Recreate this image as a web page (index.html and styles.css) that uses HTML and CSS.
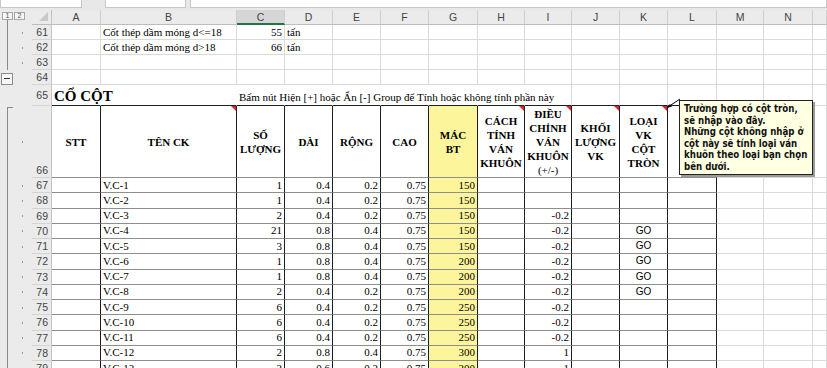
FILE: index.html
```html
<!DOCTYPE html>
<html lang="vi">
<head>
    <meta charset="UTF-8">
    <title>Khối lượng cổ cột</title>
    <link rel="stylesheet" href="styles.css">
</head>
<body>

    <!-- Formula bar (bottom edge only) -->
    <div class="topbar">
        <div class="namebox"></div>
        <div class="fxbox"></div>
        <div class="formula"></div>
    </div>

    <div class="sheet">

        <!-- Column headers -->
        <div class="row hdr">
            <div class="gut levels"><span class="lvl">1</span><span class="lvl">2</span></div>
            <div class="corner"><span class="tri"></span></div>
            <div class="ch">A</div>
            <div class="ch">B</div>
            <div class="ch sel">C</div>
            <div class="ch">D</div>
            <div class="ch">E</div>
            <div class="ch">F</div>
            <div class="ch">G</div>
            <div class="ch">H</div>
            <div class="ch">I</div>
            <div class="ch">J</div>
            <div class="ch">K</div>
            <div class="ch">L</div>
            <div class="ch">M</div>
            <div class="ch">N</div>
            <div class="ch"></div>
        </div>

        <div class="row">
            <div class="gut line"><span class="dot"></span></div>
            <div class="rh">61</div>
            <div class="c"></div>
            <div class="c">Cốt thép dầm móng d&lt;=18</div>
            <div class="c num">55</div>
            <div class="c">tấn</div>
            <div class="c"></div><div class="c"></div><div class="c"></div><div class="c"></div>
            <div class="c"></div><div class="c"></div><div class="c"></div><div class="c"></div>
            <div class="c"></div><div class="c"></div><div class="c"></div>
        </div>

        <div class="row">
            <div class="gut line"><span class="dot"></span></div>
            <div class="rh">62</div>
            <div class="c"></div>
            <div class="c">Cốt thép dầm móng d&gt;18</div>
            <div class="c num">66</div>
            <div class="c">tấn</div>
            <div class="c"></div><div class="c"></div><div class="c"></div><div class="c"></div>
            <div class="c"></div><div class="c"></div><div class="c"></div><div class="c"></div>
            <div class="c"></div><div class="c"></div><div class="c"></div>
        </div>

        <div class="row">
            <div class="gut line"><span class="dot"></span></div>
            <div class="rh">63</div>
            <div class="c"></div><div class="c"></div><div class="c"></div><div class="c"></div>
            <div class="c"></div><div class="c"></div><div class="c"></div><div class="c"></div>
            <div class="c"></div><div class="c"></div><div class="c"></div><div class="c"></div>
            <div class="c"></div><div class="c"></div><div class="c"></div>
        </div>

        <div class="row">
            <div class="gut"><span class="minus"></span></div>
            <div class="rh">64</div>
            <div class="c"></div><div class="c"></div><div class="c"></div><div class="c"></div>
            <div class="c"></div><div class="c"></div><div class="c"></div><div class="c"></div>
            <div class="c"></div><div class="c"></div><div class="c"></div><div class="c"></div>
            <div class="c"></div><div class="c"></div><div class="c"></div>
        </div>

        <!-- Section title -->
        <div class="row r65">
            <div class="gut"></div>
            <div class="rh">65</div>
            <div class="c nog top"><span class="title">CỔ CỘT</span></div>
            <div class="c nog top"></div>
            <div class="c nog top">Bấm nút Hiện [+] hoặc Ẩn [-] Group để Tính hoặc không tính phần này</div>
            <div class="c nog top"></div>
            <div class="c nog top"></div>
            <div class="c nog top"></div>
            <div class="c nog top"></div>
            <div class="c nog top"></div>
            <div class="c top"></div>
            <div class="c top"></div>
            <div class="c top"></div>
            <div class="c top"></div>
            <div class="c"></div><div class="c"></div><div class="c"></div>
        </div>

        <!-- Table header -->
        <div class="row r66">
            <div class="gut bracket"><span class="dot"></span></div>
            <div class="rh bottom">66</div>
            <div class="c t th"><span>STT</span></div>
            <div class="c t th note"><span>TÊN CK</span></div>
            <div class="c t th"><span>SỐ<br>LƯỢNG</span></div>
            <div class="c t th"><span>DÀI</span></div>
            <div class="c t th"><span>RỘNG</span></div>
            <div class="c t th"><span>CAO</span></div>
            <div class="c t th yel"><span>MÁC<br>BT</span></div>
            <div class="c t th note"><span>CÁCH<br>TÍNH<br>VÁN<br>KHUÔN</span></div>
            <div class="c t th note"><span>ĐIỀU<br>CHỈNH<br>VÁN<br>KHUÔN<br><em class="plain">(+/-)</em></span></div>
            <div class="c t th note"><span>KHỐI<br>LƯỢNG<br>VK</span></div>
            <div class="c t th note"><span>LOẠI<br>VK<br>CỘT<br>TRÒN</span></div>
            <div class="c t"></div>
            <div class="c"></div><div class="c"></div><div class="c"></div>
        </div>

        <div class="row data">
            <div class="gut line"><span class="dot"></span></div>
            <div class="rh">67</div>
            <div class="c t"></div><div class="c t">V.C-1</div>
            <div class="c t num">1</div><div class="c t num">0.4</div><div class="c t num">0.2</div><div class="c t num">0.75</div>
            <div class="c t num yel">150</div><div class="c t"></div><div class="c t num"></div><div class="c t"></div>
            <div class="c t go"></div><div class="c t"></div>
            <div class="c"></div><div class="c"></div><div class="c"></div>
        </div>

        <div class="row data">
            <div class="gut line"><span class="dot"></span></div>
            <div class="rh">68</div>
            <div class="c t"></div><div class="c t">V.C-2</div>
            <div class="c t num">1</div><div class="c t num">0.4</div><div class="c t num">0.2</div><div class="c t num">0.75</div>
            <div class="c t num yel">150</div><div class="c t"></div><div class="c t num"></div><div class="c t"></div>
            <div class="c t go"></div><div class="c t"></div>
            <div class="c"></div><div class="c"></div><div class="c"></div>
        </div>

        <div class="row data">
            <div class="gut line"><span class="dot"></span></div>
            <div class="rh">69</div>
            <div class="c t"></div><div class="c t">V.C-3</div>
            <div class="c t num">2</div><div class="c t num">0.4</div><div class="c t num">0.2</div><div class="c t num">0.75</div>
            <div class="c t num yel">150</div><div class="c t"></div><div class="c t num">-0.2</div><div class="c t"></div>
            <div class="c t go"></div><div class="c t"></div>
            <div class="c"></div><div class="c"></div><div class="c"></div>
        </div>

        <div class="row data">
            <div class="gut line"><span class="dot"></span></div>
            <div class="rh">70</div>
            <div class="c t"></div><div class="c t">V.C-4</div>
            <div class="c t num">21</div><div class="c t num">0.8</div><div class="c t num">0.4</div><div class="c t num">0.75</div>
            <div class="c t num yel">150</div><div class="c t"></div><div class="c t num">-0.2</div><div class="c t"></div>
            <div class="c t go">GO</div><div class="c t"></div>
            <div class="c"></div><div class="c"></div><div class="c"></div>
        </div>

        <div class="row data">
            <div class="gut line"><span class="dot"></span></div>
            <div class="rh">71</div>
            <div class="c t"></div><div class="c t">V.C-5</div>
            <div class="c t num">3</div><div class="c t num">0.8</div><div class="c t num">0.4</div><div class="c t num">0.75</div>
            <div class="c t num yel">150</div><div class="c t"></div><div class="c t num">-0.2</div><div class="c t"></div>
            <div class="c t go">GO</div><div class="c t"></div>
            <div class="c"></div><div class="c"></div><div class="c"></div>
        </div>

        <div class="row data">
            <div class="gut line"><span class="dot"></span></div>
            <div class="rh">72</div>
            <div class="c t"></div><div class="c t">V.C-6</div>
            <div class="c t num">1</div><div class="c t num">0.8</div><div class="c t num">0.4</div><div class="c t num">0.75</div>
            <div class="c t num yel">200</div><div class="c t"></div><div class="c t num">-0.2</div><div class="c t"></div>
            <div class="c t go">GO</div><div class="c t"></div>
            <div class="c"></div><div class="c"></div><div class="c"></div>
        </div>

        <div class="row data">
            <div class="gut line"><span class="dot"></span></div>
            <div class="rh">73</div>
            <div class="c t"></div><div class="c t">V.C-7</div>
            <div class="c t num">1</div><div class="c t num">0.8</div><div class="c t num">0.4</div><div class="c t num">0.75</div>
            <div class="c t num yel">200</div><div class="c t"></div><div class="c t num">-0.2</div><div class="c t"></div>
            <div class="c t go">GO</div><div class="c t"></div>
            <div class="c"></div><div class="c"></div><div class="c"></div>
        </div>

        <div class="row data">
            <div class="gut line"><span class="dot"></span></div>
            <div class="rh">74</div>
            <div class="c t"></div><div class="c t">V.C-8</div>
            <div class="c t num">2</div><div class="c t num">0.4</div><div class="c t num">0.2</div><div class="c t num">0.75</div>
            <div class="c t num yel">200</div><div class="c t"></div><div class="c t num">-0.2</div><div class="c t"></div>
            <div class="c t go">GO</div><div class="c t"></div>
            <div class="c"></div><div class="c"></div><div class="c"></div>
        </div>

        <div class="row data">
            <div class="gut line"><span class="dot"></span></div>
            <div class="rh">75</div>
            <div class="c t"></div><div class="c t">V.C-9</div>
            <div class="c t num">6</div><div class="c t num">0.4</div><div class="c t num">0.2</div><div class="c t num">0.75</div>
            <div class="c t num yel">250</div><div class="c t"></div><div class="c t num">-0.2</div><div class="c t"></div>
            <div class="c t go"></div><div class="c t"></div>
            <div class="c"></div><div class="c"></div><div class="c"></div>
        </div>

        <div class="row data">
            <div class="gut line"><span class="dot"></span></div>
            <div class="rh">76</div>
            <div class="c t"></div><div class="c t">V.C-10</div>
            <div class="c t num">6</div><div class="c t num">0.4</div><div class="c t num">0.2</div><div class="c t num">0.75</div>
            <div class="c t num yel">250</div><div class="c t"></div><div class="c t num">-0.2</div><div class="c t"></div>
            <div class="c t go"></div><div class="c t"></div>
            <div class="c"></div><div class="c"></div><div class="c"></div>
        </div>

        <div class="row data">
            <div class="gut line"><span class="dot"></span></div>
            <div class="rh">77</div>
            <div class="c t"></div><div class="c t">V.C-11</div>
            <div class="c t num">6</div><div class="c t num">0.4</div><div class="c t num">0.2</div><div class="c t num">0.75</div>
            <div class="c t num yel">250</div><div class="c t"></div><div class="c t num">-0.2</div><div class="c t"></div>
            <div class="c t go"></div><div class="c t"></div>
            <div class="c"></div><div class="c"></div><div class="c"></div>
        </div>

        <div class="row data">
            <div class="gut line"><span class="dot"></span></div>
            <div class="rh">78</div>
            <div class="c t"></div><div class="c t">V.C-12</div>
            <div class="c t num">2</div><div class="c t num">0.8</div><div class="c t num">0.4</div><div class="c t num">0.75</div>
            <div class="c t num yel">300</div><div class="c t"></div><div class="c t num">1</div><div class="c t"></div>
            <div class="c t go"></div><div class="c t"></div>
            <div class="c"></div><div class="c"></div><div class="c"></div>
        </div>

        <div class="row data">
            <div class="gut line"><span class="dot"></span></div>
            <div class="rh">79</div>
            <div class="c t"></div><div class="c t">V.C-13</div>
            <div class="c t num">2</div><div class="c t num">0.6</div><div class="c t num">0.2</div><div class="c t num">0.75</div>
            <div class="c t num yel">300</div><div class="c t"></div><div class="c t num">1</div><div class="c t"></div>
            <div class="c t go"></div><div class="c t"></div>
            <div class="c"></div><div class="c"></div><div class="c"></div>
        </div>

        <!-- Cell comment on K66 -->
        <svg class="pointer" width="30" height="20" viewBox="0 0 30 20">
            <line x1="9" y1="10" x2="21" y2="2" stroke="#000" stroke-width="1"/>
            <path d="M8 11 L13 9.5 L11 7 Z" fill="#000"/>
        </svg>
        <div class="comment">
            Trường hợp có cột tròn,<br>
            sẽ nhập vào đây.<br>
            Những cột không nhập ở<br>
            cột này sẽ tính loại ván<br>
            khuôn theo loại bạn chọn<br>
            bên dưới.
        </div>
    </div>

</body>
</html>
```

FILE: styles.css
```css
/* General */
* {
    margin: 0;
    padding: 0;
    box-sizing: border-box;
}

body {
    font-family: 'Liberation Serif', 'Times New Roman', serif;
    font-size: 11px;
    color: #000;
    background: #fff;
    width: 827px;
    height: 368px;
    overflow: hidden;
}

/* Formula bar strip */
.topbar {
    height: 10px;
    background: #e8e8e8;
    display: flex;
    align-items: flex-end;
    padding-bottom: 2px;
}

.namebox,
.fxbox,
.formula {
    height: 8px;
    background: #fff;
    border: 1px solid #c6c6c6;
    border-top: none;
}

.namebox { width: 82px; }
.fxbox { width: 81px; margin-left: 23px; }
.formula { flex: 1; margin-left: 4px; }

/* Sheet grid */
.sheet {
    position: relative;
}

.row {
    display: grid;
    grid-template-columns: 32px 20px 49px 136px 48px 48px 48px 48px 49px 47px 47px 48px 48px 49px 47px 49px 1fr;
    height: 15px;
}

.r65 { height: 21px; }
.r66 { height: 72px; }
.data { height: 15.25px; }

.c {
    border-right: 1px solid #dadada;
    border-bottom: 1px solid #dadada;
    display: flex;
    align-items: center;
    padding: 0 2px;
    white-space: nowrap;
    line-height: 1;
    position: relative;
}

.num {
    justify-content: flex-end;
}

/* Outline gutter */
.gut {
    background: #ebebeb;
    display: flex;
    align-items: center;
}

.gut.line {
    background: linear-gradient(#8a8a8a, #8a8a8a) 7px 0 / 1px 100% no-repeat, #ebebeb;
}

.gut.bracket {
    background:
        linear-gradient(#8a8a8a, #8a8a8a) 7px 1px / 1px 100% no-repeat,
        linear-gradient(#8a8a8a, #8a8a8a) 7px 1px / 6px 1px no-repeat,
        #ebebeb;
}

.dot {
    width: 1px;
    height: 2px;
    margin-left: 22px;
    background: #9a9a9a;
}

.minus {
    width: 12px;
    height: 12px;
    margin-left: 1px;
    margin-top: 2px;
    border: 1px solid #8c8c8c;
    background: linear-gradient(#333, #333) center / 6px 1px no-repeat, #f6f6f6;
}

.levels {
    background: linear-gradient(#8a8a8a, #8a8a8a) 7px 10px / 1px 100% no-repeat, #ebebeb;
    align-items: flex-start;
    padding: 2px 0 0 2px;
    gap: 1px;
}

.lvl {
    width: 11px;
    height: 8px;
    border: 1px solid #a8a8a8;
    background: #f6f6f6;
    font-family: 'Liberation Sans', Arial, sans-serif;
    font-size: 7px;
    line-height: 6px;
    text-align: center;
    color: #555;
}

/* Row and column headers */
.rh {
    background: #ebebeb;
    border-right: 1px solid #c4c4c4;
    border-bottom: 1px solid #d4d4d4;
    display: flex;
    align-items: center;
    justify-content: flex-end;
    padding-right: 3px;
    font-family: 'Liberation Sans', Arial, sans-serif;
    font-size: 10.5px;
    color: #444;
}

.rh.bottom {
    align-items: flex-end;
    padding-bottom: 1px;
}

.corner {
    background: #ebebeb;
    border-right: 1px solid #c4c4c4;
    border-bottom: 1px solid #bdbdbd;
    display: flex;
    align-items: flex-end;
    justify-content: flex-end;
    padding: 0 3px 3px 0;
}

.tri {
    width: 0;
    height: 0;
    border-left: 9px solid transparent;
    border-bottom: 9px solid #c9c9c9;
}

.ch {
    background: #ebebeb;
    border-right: 1px solid #cfcfcf;
    border-bottom: 1px solid #bdbdbd;
    display: flex;
    align-items: center;
    justify-content: center;
    font-family: 'Liberation Sans', Arial, sans-serif;
    font-size: 10.5px;
    color: #444;
}

.ch.sel {
    background: #d6d6d6;
    border-bottom: 2px solid #217346;
}

/* Row 65 */
.nog {
    border-right-color: transparent;
}

.top {
    border-bottom-color: #1e1e1e;
}

.r65 .c {
    align-items: flex-end;
    padding-bottom: 2px;
}

.title {
    font-size: 15px;
    font-weight: bold;
    margin-bottom: -1px;
}

/* Table block A:L */
.t {
    border-right-color: #1e1e1e;
    border-bottom-color: #8e8e8e;
}

.th {
    font-weight: bold;
    text-align: center;
    justify-content: center;
    line-height: 14px;
    padding: 0;
}

.plain {
    font-weight: normal;
    font-style: normal;
}

.yel {
    background: #fdf59b;
}

.go {
    justify-content: center;
    font-family: 'Liberation Sans', Arial, sans-serif;
    font-size: 10px;
}

/* Red comment markers */
.note::after {
    content: "";
    position: absolute;
    top: 0;
    right: 0;
    border-left: 5px solid transparent;
    border-top: 5px solid #d7262c;
}

/* Comment popup */
.pointer {
    position: absolute;
    left: 659px;
    top: 87px;
}

.comment {
    position: absolute;
    left: 679px;
    top: 90px;
    width: 134px;
    height: 75px;
    background: #ffffe1;
    border: 1px solid #222;
    box-shadow: 2px 2px 0 #9a9a9a;
    padding: 2px 0 0 4px;
    font-family: 'DejaVu Sans Condensed', 'DejaVu Sans', sans-serif;
    font-weight: bold;
    font-size: 9.6px;
    line-height: 11.5px;
    color: #111;
    white-space: nowrap;
}
```
